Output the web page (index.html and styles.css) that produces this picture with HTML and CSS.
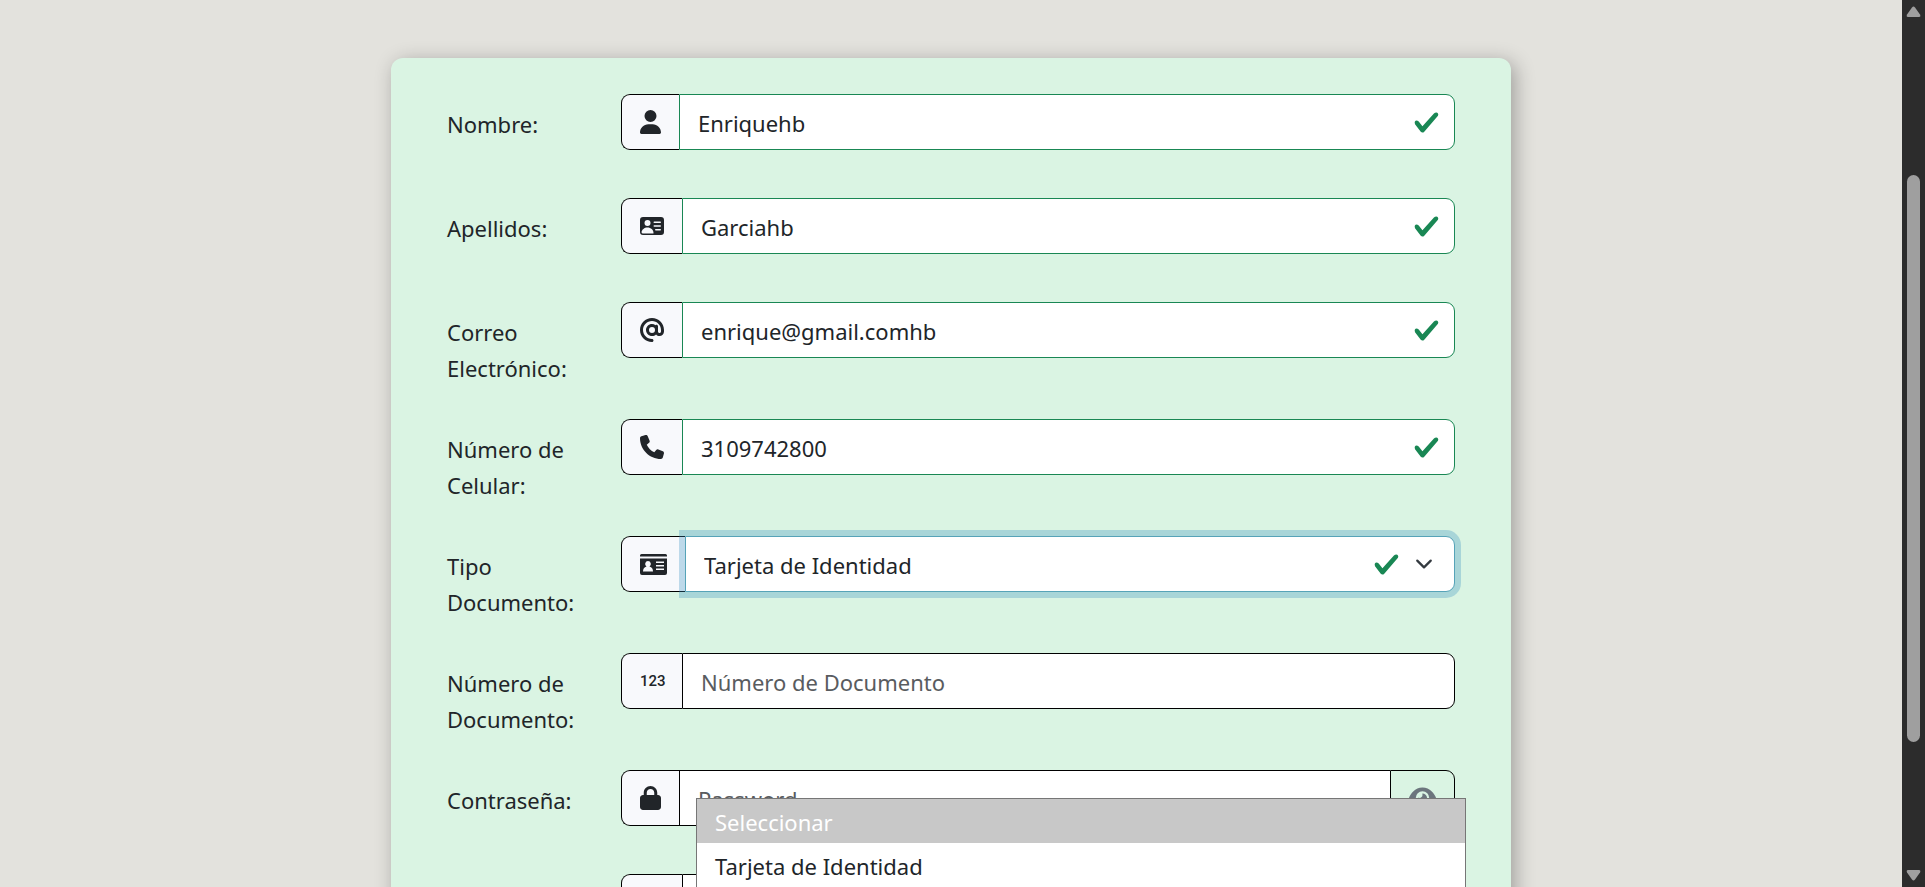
FILE: index.html
```html
<!DOCTYPE html>
<html lang="es">
<head>
<meta charset="utf-8">
<title>Registro</title>
<link rel="stylesheet" href="styles.css">
</head>
<body>
<svg class="sprite" aria-hidden="true">
  <symbol id="check" viewBox="0 0 8 8"><path fill="#198754" d="M2.3 6.73.6 4.53c-.4-1.04.46-1.4 1.1-.8l1.1 1.4 3.4-3.8c.6-.63 1.6-.27 1.2.7l-4 4.6c-.43.5-.8.4-1.1.1z"/></symbol>
</svg>
<main class="page">
  <form class="card">
    <div class="field">
      <label class="label" for="nombre">Nombre:</label>
      <div class="group valid">
        <span class="addon"><svg class="icon" viewBox="0 0 448 512" width="21" height="24"><path d="M224 256A128 128 0 1 0 224 0a128 128 0 1 0 0 256zm-45.7 48C79.8 304 0 383.8 0 482.3C0 498.7 13.3 512 29.7 512H418.3c16.4 0 29.7-13.3 29.7-29.7C448 383.8 368.2 304 269.7 304H178.3z"/></svg></span>
        <div class="control"><input class="input" id="nombre" type="text" value="Enriquehb"><svg class="mark"><use href="#check"/></svg></div>
      </div>
    </div>
    <div class="field">
      <label class="label" for="apellidos">Apellidos:</label>
      <div class="group valid">
        <span class="addon"><svg class="icon" viewBox="0 0 16 16" width="24" height="24"><path d="M0 4a2 2 0 0 1 2-2h12a2 2 0 0 1 2 2v8a2 2 0 0 1-2 2H2a2 2 0 0 1-2-2V4Zm9 1.5a.5.5 0 0 0 .5.5h4a.5.5 0 0 0 0-1h-4a.5.5 0 0 0-.5.5ZM9 8a.5.5 0 0 0 .5.5h4a.5.5 0 0 0 0-1h-4A.5.5 0 0 0 9 8Zm1 2.5a.5.5 0 0 0 .5.5h3a.5.5 0 0 0 0-1h-3a.5.5 0 0 0-.5.5Zm-1 2C9 10.567 7.21 9 5 9c-2.086 0-3.8 1.398-3.984 3.181A1 1 0 0 0 2 13h6.96c.026-.163.04-.33.04-.5ZM7 6a2 2 0 1 0-4 0 2 2 0 0 0 4 0Z"/></svg></span>
        <div class="control"><input class="input" id="apellidos" type="text" value="Garciahb"><svg class="mark"><use href="#check"/></svg></div>
      </div>
    </div>
    <div class="field">
      <label class="label" for="correo">Correo Electrónico:</label>
      <div class="group valid">
        <span class="addon"><svg class="icon" viewBox="0 0 512 512" width="24" height="24"><path d="M256 64C150 64 64 150 64 256s86 192 192 192c17.7 0 32 14.3 32 32s-14.3 32-32 32C114.6 512 0 397.4 0 256S114.6 0 256 0S512 114.6 512 256v32c0 53-43 96-96 96c-29.3 0-55.6-13.2-73.2-33.9C320 371.1 289.5 384 256 384c-70.7 0-128-57.3-128-128s57.3-128 128-128c27.9 0 53.7 8.9 74.7 24.1c5.7-5 13.1-8.1 21.3-8.1c17.7 0 32 14.3 32 32v80 32c0 17.7 14.3 32 32 32s32-14.3 32-32V256c0-106-86-192-192-192zm64 192a64 64 0 1 0 -128 0 64 64 0 1 0 128 0z"/></svg></span>
        <div class="control"><input class="input" id="correo" type="text" value="enrique@gmail.comhb"><svg class="mark"><use href="#check"/></svg></div>
      </div>
    </div>
    <div class="field">
      <label class="label" for="celular">Número de Celular:</label>
      <div class="group valid">
        <span class="addon"><svg class="icon" viewBox="0 0 512 512" width="24" height="24"><path d="M164.9 24.6c-7.7-18.6-28-28.5-47.4-23.2l-88 24C12.1 30.2 0 46 0 64C0 311.4 200.6 512 448 512c18 0 33.8-12.1 38.6-29.5l24-88c5.3-19.4-4.6-39.7-23.2-47.4l-96-40c-16.3-6.8-35.2-2.1-46.3 11.6L304.7 368C234.3 334.7 177.3 277.7 144 207.3L193.3 167c13.7-11.2 18.4-30 11.6-46.3l-40-96z"/></svg></span>
        <div class="control"><input class="input" id="celular" type="text" value="3109742800"><svg class="mark"><use href="#check"/></svg></div>
      </div>
    </div>
    <div class="field">
      <label class="label" for="tipo">Tipo Documento:</label>
      <div class="group focused">
        <span class="addon"><svg class="icon" viewBox="0 0 27 24" width="27" height="24"><path fill-rule="evenodd" d="M0 4V3.5Q0 2 1.500 2H25.500Q27 2 27 3.500V4.500H0ZM0 6.500H27V21Q27 23 25 23H2Q0 23 0 21ZM8 9A3 3 0 0 0 6.500 14.500Q3 15.500 3 19.500H13Q13 15.500 9.500 14.500A3 3 0 0 0 8 9ZM16 9.500V11H24V9.500ZM16 13V14.500H24V13ZM16 16.500V18H24V16.500Z"/></svg></span>
        <div class="control">
          <select class="input select" id="tipo"><option>Seleccionar</option><option selected>Tarjeta de Identidad</option></select>
          <svg class="mark mark-select"><use href="#check"/></svg>
          <svg class="chevron" viewBox="0 0 16 16"><path fill="none" stroke="#343a40" stroke-linecap="round" stroke-linejoin="round" stroke-width="2" d="m2 5 6 6 6-6"/></svg>
          <ul class="menu" role="listbox" aria-label="Tipo Documento">
            <li class="menu-item active" role="option">Seleccionar</li>
            <li class="menu-item" role="option">Tarjeta de Identidad</li>
          </ul>
        </div>
      </div>
    </div>
    <div class="field">
      <label class="label" for="numero">Número de Documento:</label>
      <div class="group">
        <span class="addon"><span class="digits">123</span></span>
        <div class="control"><input class="input" id="numero" type="text" placeholder="Número de Documento"></div>
      </div>
    </div>
    <div class="field">
      <label class="label" for="clave">Contraseña:</label>
      <div class="group">
        <span class="addon"><svg class="icon" viewBox="0 0 448 512" width="21" height="24"><path d="M144 144v48H304V144c0-44.200-35.800-80-80-80s-80 35.800-80 80zM80 192V144C80 64.500 144.500 0 224 0s144 64.500 144 144v48h16c35.300 0 64 28.700 64 64V448c0 35.300-28.700 64-64 64H64c-35.300 0-64-28.700-64-64V256c0-35.300 28.700-64 64-64H80z"/></svg></span>
        <div class="control with-button"><input class="input" id="clave" type="password" placeholder="Password"></div>
        <button class="reveal" type="button" aria-label="Mostrar contraseña"><svg class="icon" viewBox="0 0 576 512" width="27" height="24"><path d="M288 32c-80.800 0-145.500 36.800-192.600 80.600C48.600 156 17.300 208 2.500 243.700c-3.300 7.900-3.300 16.700 0 24.600C17.300 304 48.600 356 95.400 399.400C142.500 443.200 207.200 480 288 480s145.500-36.800 192.600-80.600c46.800-43.500 78.100-95.400 93-131.100c3.300-7.900 3.300-16.700 0-24.600c-14.900-35.700-46.200-87.700-93-131.100C433.500 68.800 368.800 32 288 32zM144 256a144 144 0 1 1 288 0 144 144 0 1 1 -288 0zm144-64c0 35.300-28.700 64-64 64c-7.100 0-13.900-1.200-20.300-3.300c-5.500-1.800-11.900 1.600-11.700 7.400c.3 6.900 1.300 13.800 3.200 20.700c13.700 51.200 66.400 81.600 117.600 67.900s81.600-66.400 67.900-117.600c-11.100-41.500-47.800-69.400-88.600-71.100c-5.800-.2-9.200 6.100-7.400 11.700c2.100 6.400 3.300 13.200 3.300 20.300z"/></svg></button>
      </div>
    </div>
    <div class="field">
      <span class="label"></span>
      <div class="group">
        <span class="addon"><svg class="icon" viewBox="0 0 448 512" width="24" height="24"><path d="M144 144v48H304V144c0-44.200-35.800-80-80-80s-80 35.800-80 80zM80 192V144C80 64.500 144.500 0 224 0s144 64.500 144 144v48h16c35.300 0 64 28.700 64 64V448c0 35.300-28.700 64-64 64H64c-35.300 0-64-28.700-64-64V256c0-35.300 28.700-64 64-64H80z"/></svg></span>
        <div class="control"><input class="input" type="password" aria-label="Confirmar contraseña"></div>
      </div>
    </div>
  </form>
</main>
<div class="scrollbar" aria-hidden="true">
  <svg class="arrow" viewBox="0 0 23 23"><path d="M10 7.500Q11.500 5.500 13 7.500L18 14.500Q19 17 17 17H6Q4 17 5 14.500Z"/></svg>
  <div class="track"><div class="before"></div><div class="thumb"></div><div class="after"></div></div>
  <svg class="arrow" viewBox="0 0 23 23"><path d="M10 15.500Q11.500 17.500 13 15.500L18 8.500Q19 6 17 6H6Q4 6 5 8.500Z"/></svg>
</div>
</body>
</html>
```
FILE: styles.css
```css
* { box-sizing: border-box; }
body {
  margin: 0;
  height: 100vh;
  display: flex;
  overflow: hidden;
  background: #e3e2dd;
  color: #212529;
  font: 22px/36px "Noto Sans", "Open Sans", sans-serif;
}
.sprite { position: absolute; width: 0; height: 0; }
.page { flex: 1; min-width: 0; overflow: hidden; padding: 58px 24px 0; }
.card {
  max-width: 1120px;
  margin: 0 auto;
  padding: 36px 56px;
  border-radius: 12px;
  background: #daf4e3;
  box-shadow: 4px 4px 20px rgba(0, 0, 0, .3);
}
.field {
  display: grid;
  grid-template-columns: 138px minmax(0, 1fr);
  column-gap: 36px;
  align-items: start;
  margin-bottom: 24px;
}
.label { padding: 12px 0 9px; }
.group { display: flex; margin-bottom: 24px; }
.addon {
  display: flex;
  align-items: center;
  padding: 0 18px;
  height: 56px;
  border: 1px solid #000;
  border-right: 0;
  border-radius: 9px 0 0 9px;
  background: #f8f9fc;
}
.icon { display: block; fill: currentColor; }
.digits { width: 24px; font: 500 15px/24px Roboto, sans-serif; }
.control { position: relative; flex: 1; min-width: 0; }
.input {
  display: block;
  width: 100%;
  height: 56px;
  padding: 2px 18px 0;
  border: 1px solid #000;
  border-radius: 0 9px 9px 0;
  outline: 0;
  background: #fff;
  color: inherit;
  font: inherit;
}
.input::placeholder { color: #595c5f; opacity: 1; }
.valid .input { border-color: #198754; }
.with-button .input { border-radius: 0; border-right: 0; }
.select { appearance: none; }
.focused .input { border-color: #56a3b8; box-shadow: 0 0 0 6px rgba(54, 142, 192, .3); }
.mark { position: absolute; top: 15px; right: 15px; width: 27px; height: 27px; }
.mark-select { right: 55px; }
.chevron { position: absolute; top: 19px; right: 22px; width: 18px; height: 18px; }
.reveal {
  padding: 0 18px;
  border: 1px solid #000;
  border-radius: 0 9px 9px 0;
  background: transparent;
  color: #6c757d;
}
.menu {
  position: absolute;
  z-index: 2;
  top: 262px;
  left: 11px;
  right: -11px;
  margin: 0;
  padding: 0;
  border: 1px solid #767676;
  background: #fff;
  list-style: none;
}
.menu-item { padding: 5px 18px 3px; }
.active { background: #c8c8c8; color: #fff; }
.scrollbar { width: 23px; display: flex; flex-direction: column; background: #2c2c2c; }
.arrow { width: 23px; height: 23px; fill: #9f9f9f; }
.track { flex: 1; display: flex; flex-direction: column; padding: 0 5px; }
.before { flex: 152; }
.thumb { flex: 567; border-radius: 7px; background: #9f9f9f; }
.after { flex: 122; }
```
